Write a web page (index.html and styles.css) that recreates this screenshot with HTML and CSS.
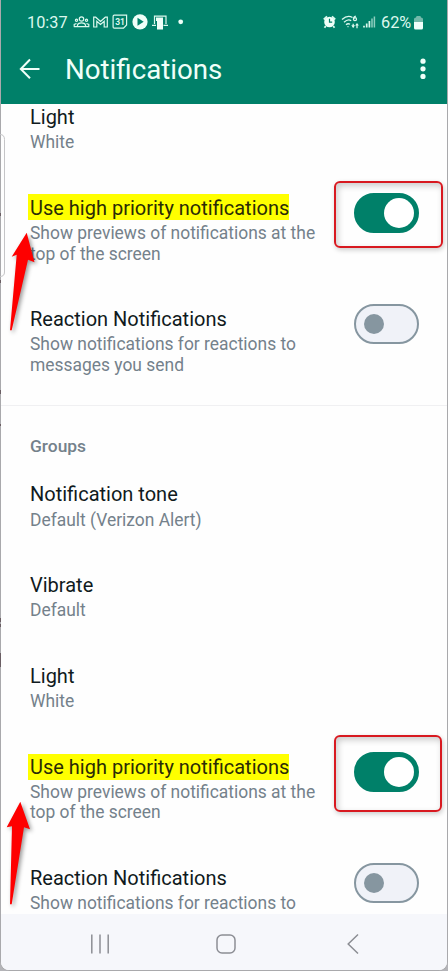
FILE: index.html
```html
<!DOCTYPE html>
<html lang="en">
<head>
<meta charset="utf-8">
<title>Notifications</title>
<link rel="stylesheet" href="styles.css">
</head>
<body>
<div class="phone">
  <header class="top">
    <div class="status">
      <span class="time">10:37</span>
      <svg class="status-left" width="116" height="18" viewBox="0 0 116 18" fill="none" stroke="#dcf8ee" stroke-width="1.2">
        <circle cx="8.500" cy="6" r="2.200"/><circle cx="3.500" cy="7.300" r="1.100"/><circle cx="13.500" cy="7.300" r="1.100"/>
        <path d="M4.500 13.700v-1.800c1-2.600 7-2.600 8 0v1.800zM1.200 13.700v-2.200l2.300-1M15.800 13.700v-2.200l-2.300-1M.8 13.600h15.500"/>
        <path d="M20.700 14V4.200h2l4.800 4.300 4.800-4.300h2V14h-3.100V8.300l-3.700 3.200-3.700-3.200V14z"/>
        <path d="M41.300 2.200h12.300v9.700l-3.100 3.300h-9.200q-1.200 0-1.200-1.200V3.400q0-1.200 1.200-1.200z"/>
        <text class="date" x="42.200" y="12">31</text>
        <circle cx="67" cy="8.800" r="7.600" fill="#effff9" stroke="none"/><path d="M64.500 4.800v8l6.200-4z" fill="#008069" stroke="none"/>
        <path d="M81.500 11V3.200h11.500V11M79 12.300h4M90.500 12.300h4.500"/><path d="M83 4.500h7V16.500h-6V8H83z" fill="#effff9" stroke="none"/>
        <circle cx="107.700" cy="8.800" r="2.400" fill="#effff9" stroke="none"/>
      </svg>
      <svg class="status-right" width="54" height="18" viewBox="0 0 54 18" fill="none" stroke="#dcf8ee" stroke-width="1.3">
        <circle cx="6.500" cy="9" r="5.300" fill="#effff9" stroke="none"/><path d="M.8 6.500L4 3.300M12.200 6.500L9 3.300M2.800 13l-1.300 1.700M10.200 13l1.300 1.700" stroke-width="1.800"/><path d="M6.500 5.700v3.500h2.700" stroke="#008069" stroke-width="1.200"/>
        <path d="M19 6.500q5.500-5 10.500-2M21 9.200q4-3.700 7.200-1.500M23 11.700q2-1.700 4-.4M24.500 13.600h1"/>
        <path d="M32.800 3.100q-2.300.6-2.300 3.200M30.200 10.700v3.600M34 11v4.200"/><circle cx="32" cy="6.200" r="1.500"/><path d="M28.300 12.300h3.800l-1.900 2.600zM32.100 12.600h3.800L34 10z" fill="#dcf8ee" stroke="none"/>
        <path d="M41 12.800v1.700M43.700 10.500v4M46.400 8v6.500" stroke-width="1.700"/><path d="M49 5.500v9M51.400 3.500v11" stroke-width="1.500" opacity=".65"/>
      </svg>
      <span class="percent">62%</span>
      <svg class="battery" width="9" height="14" viewBox="0 0 9 14"><path d="M0 3q0-1.500 2-1.500Q2 0 3 0h3q1 0 1 1.500 2 0 2 1.500v3H0z" fill="#73b9aa"/><path d="M0 6h9v6q0 1.500-1.500 1.500h-6Q0 13.500 0 12z" fill="#f0fffb"/></svg>
    </div>
    <div class="bar">
      <svg class="back" width="22" height="22" viewBox="0 0 22 22" fill="none" stroke="#effff9" stroke-width="2"><path d="M20.500 11H2.200M11 1.500L1.800 11l9.200 9.300"/></svg>
      <h1>Notifications</h1>
      <svg class="more" width="6" height="22" viewBox="0 0 6 22" fill="#effff9"><circle cx="3" cy="3.200" r="2.600"/><circle cx="3" cy="10.800" r="2.600"/><circle cx="3" cy="18.400" r="2.600"/></svg>
    </div>
  </header>

  <main class="list">
    <div class="item"><div class="copy"><h2>Light</h2><p>White</p></div></div>
    <div class="item">
      <div class="copy"><h2><span class="mark">Use high priority notifications</span></h2><p>Show previews of notifications at the<br>top of the screen</p></div>
      <div class="toggle on"><i></i><b class="frame"></b></div>
    </div>
    <div class="item">
      <div class="copy"><h2>Reaction Notifications</h2><p>Show notifications for reactions to<br>messages you send</p></div>
      <div class="toggle"><i></i></div>
    </div>
    <h3>Groups</h3>
    <div class="item"><div class="copy"><h2>Notification tone</h2><p>Default (Verizon Alert)</p></div></div>
    <div class="item"><div class="copy"><h2>Vibrate</h2><p>Default</p></div></div>
    <div class="item"><div class="copy"><h2>Light</h2><p>White</p></div></div>
    <div class="item">
      <div class="copy"><h2><span class="mark low">Use high priority notifications</span></h2><p>Show previews of notifications at the<br>top of the screen</p></div>
      <div class="toggle on"><i></i><b class="frame tall"></b></div>
    </div>
    <div class="item last">
      <div class="copy"><h2>Reaction Notifications</h2><p>Show notifications for reactions to</p></div>
      <div class="toggle"><i></i></div>
    </div>
  </main>

  <nav class="nav">
    <svg width="20" height="20" viewBox="0 0 20 20" fill="none" stroke="#8c8e94" stroke-width="1.500"><path d="M1.800 .5v19M10 .5v19M18.200 .5v19"/></svg>
    <svg class="home" width="20" height="20" viewBox="0 0 20 20" fill="none" stroke="#8c8e94" stroke-width="1.500"><rect x="1" y="1" width="18" height="18" rx="5"/></svg>
    <svg width="12" height="22" viewBox="0 0 12 22" fill="none" stroke="#8c8e94" stroke-width="1.500"><path d="M11 1.500L1.200 11l9.800 9.500"/></svg>
  </nav>
</div>
<svg class="overlay" width="448" height="971" viewBox="0 0 448 971">
  <path d="M0 134.500q4.500 0 4.500 5V272q0 4.500-4.500 4.500" fill="none" stroke="#c5c5c7"/>
  <path d="M0 213v3M0 280v3M0 390v4M0 424v2M0 618v4M0 624v3M0 653v14" stroke="#55454b" stroke-width="1.500"/>
  <g class="arrows" fill="#fe0000">
    <path d="M26.700 232.700L11.700 256.700 16.700 254.700 10 330.300 11.700 330.300 28 259.700 34.500 262.200z"/>
    <path d="M20.300 801.700L6.700 827.300 12 826.300 10 904.300 11.700 904.300 24 827.300 30 829.300z"/>
  </g>
</svg>
</body>
</html>
```
FILE: styles.css
```css
* { box-sizing: border-box; }
body { margin: 0; background: #b4b4b8; font-family: Roboto, sans-serif; }
h1, h2, h3, p { margin: 0; font-weight: 400; }
svg { display: block; flex: none; }

.phone {
  height: 971px;
  display: flex;
  flex-direction: column;
  border: solid #a9a9ac;
  border-width: 0 1px 1px;
  border-radius: 0 0 9px 9px;
  overflow: hidden;
  background: #fefefe;
}

.top { flex: none; height: 104px; background: #008069; color: #effff9; }
.status { display: flex; align-items: center; height: 26px; margin: 0 24px 0 26px; transform: translateY(9px); }
.time, .percent { font-size: 16.300px; line-height: 20px; color: #dcf8ee; padding-top: 1px; }
.time { width: 41px; white-space: nowrap; }
.status-left { margin-left: 4.500px; }
.date { font: 700 8.500px Roboto, sans-serif; fill: #dcf8ee; stroke: none; }
.status-right { margin-left: auto; }
.percent { width: 30px; margin: 0 3px 0 4px; white-space: nowrap; }
.battery { margin-top: 1px; }
.bar { display: flex; align-items: center; height: 40px; margin: 23px 21.500px 0 18px; }
h1 { margin: 2px 0 0 24px; font-size: 27.700px; line-height: 40px; }
.more { margin-left: auto; }

.list { flex: 1; min-height: 0; overflow: hidden; padding: 0 28px 0 29px; }
.item { display: flex; justify-content: space-between; align-items: flex-start; padding: 20.400px 0; }
.item:first-child { margin-top: -21.500px; }
.last { padding-bottom: 0; }
.copy { white-space: nowrap; }
h2 { font-size: 20px; line-height: 28px; margin-bottom: 1.500px; color: #101a20; }
p { font-size: 17.430px; line-height: 20.500px; color: #74818b; }
h3 {
  height: 54.800px;
  margin: 9px -28px 0 -29px;
  padding: 30.200px 29px 0;
  border-top: 1px solid #f0f0f2;
  font-size: 17.400px;
  line-height: 20px;
  font-weight: 500;
  color: #74818b;
}
.mark { display: inline-block; height: 26px; line-height: 28px; margin-left: -2px; padding-left: 2px; background: #ff0; vertical-align: top; color: #2a2b06; }
.low { line-height: 26px; margin-top: 1.500px; }

.toggle { position: relative; display: flex; align-items: center; width: 65px; height: 40px; padding: 0 8px; border: 2px solid #8696a0; border-radius: 20px; background: #f0f2f8; margin-top: -.6px; }
.toggle i { width: 20px; height: 20px; border-radius: 50%; background: #8696a0; }
.on { justify-content: flex-end; padding: 0 3px; border-color: #008069; background: #008069; }
.on i { width: 30px; height: 30px; background: #fff; }
.frame { position: absolute; left: -22px; top: -14px; width: 109px; height: 67px; border: 2px solid #d81920; border-radius: 6px; box-shadow: 1px 2px 5px #0003, inset 2px 3px 6px #0003; }
.tall { top: -19px; width: 108px; height: 77px; }

.nav { flex: none; display: flex; align-items: center; height: 56px; padding: 3px 88px 0 89px; background: #f6f7fb; justify-content: space-between; }
.home { margin-right: 5px; }
.overlay { position: absolute; left: 0; top: 0; pointer-events: none; }
.arrows { filter: drop-shadow(2px 2px 2px #0006); }
```
